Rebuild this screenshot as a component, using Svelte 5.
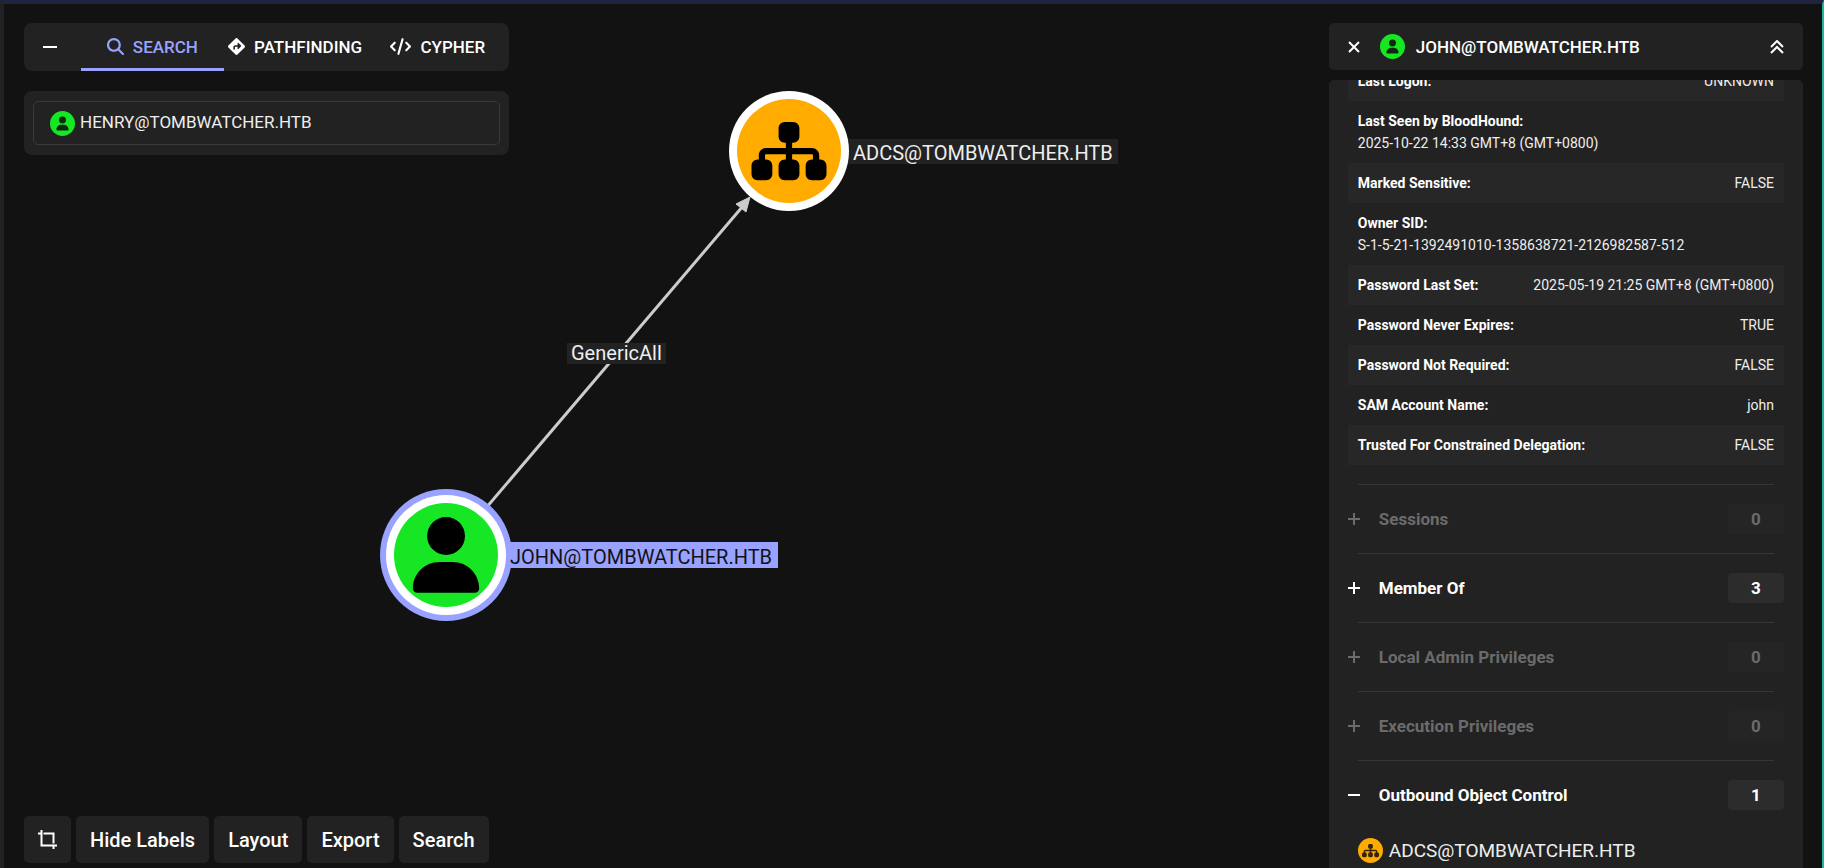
<script lang="ts">
    const userIcon =
        "M224 256A128 128 0 1 0 224 0a128 128 0 1 0 0 256zm-45.7 48C79.8 304 0 383.8 0 482.3C0 498.7 13.3 512 29.7 512H418.3c16.4 0 29.7-13.3 29.7-29.7C448 383.8 368.2 304 269.7 304H178.3z";
    const sitemapIcon =
        "M208 80c0-26.5 21.5-48 48-48h64c26.5 0 48 21.5 48 48v64c0 26.5-21.5 48-48 48h-8v40H464c30.9 0 56 25.1 56 56v32h8c26.5 0 48 21.5 48 48v64c0 26.5-21.5 48-48 48H464c-26.5 0-48-21.5-48-48V368c0-26.5 21.5-48 48-48h8V288c0-4.4-3.6-8-8-8H312v40h8c26.5 0 48 21.5 48 48v64c0 26.5-21.5 48-48 48H256c-26.5 0-48-21.5-48-48V368c0-26.5 21.5-48 48-48h8V280H112c-4.4 0-8 3.6-8 8v32h8c26.5 0 48 21.5 48 48v64c0 26.5-21.5 48-48 48H48c-26.5 0-48-21.5-48-48V368c0-26.5 21.5-48 48-48h8V288c0-30.9 25.1-56 56-56H264V192h-8c-26.5 0-48-21.5-48-48V80z";

    const tabs = ["Search", "Pathfinding", "Cypher"];
    const tools = ["Hide Labels", "Layout", "Export", "Search"];

    const fields = [
        { key: "Last Logon:", value: "UNKNOWN" },
        { key: "Last Seen by BloodHound:", value: "2025-10-22 14:33 GMT+8 (GMT+0800)", stacked: true },
        { key: "Marked Sensitive:", value: "FALSE" },
        { key: "Owner SID:", value: "S-1-5-21-1392491010-1358638721-2126982587-512", stacked: true },
        { key: "Password Last Set:", value: "2025-05-19 21:25 GMT+8 (GMT+0800)" },
        { key: "Password Never Expires:", value: "TRUE" },
        { key: "Password Not Required:", value: "FALSE" },
        { key: "SAM Account Name:", value: "john" },
        { key: "Trusted For Constrained Delegation:", value: "FALSE" },
    ];

    let sections = $state([
        { label: "Sessions", count: 0, open: false, items: [] as string[] },
        { label: "Member Of", count: 3, open: false, items: [] as string[] },
        { label: "Local Admin Privileges", count: 0, open: false, items: [] as string[] },
        { label: "Execution Privileges", count: 0, open: false, items: [] as string[] },
        { label: "Outbound Object Control", count: 1, open: true, items: ["ADCS@TOMBWATCHER.HTB"] },
    ]);

    let activeTab = $state("Search");
    let query = $state("HENRY@TOMBWATCHER.HTB");
    let details: HTMLElement;

    $effect(() => {
        details.scrollTop = 19;
    });
</script>

{#snippet userBadge()}
    <svg class="kind" viewBox="0 0 25 25" aria-hidden="true">
        <circle cx="12.5" cy="12.5" r="12.5" fill="#17e625" />
        <path d={userIcon} fill="#0b2a0d" transform="translate(6.4 5.5) scale(0.0272)" />
    </svg>
{/snippet}

<div class="page">
    <svg class="graph" role="img" aria-label="Graph">
        <line x1="442" y1="551" x2="739" y2="202" stroke="#cccccc" stroke-width="3" />
        <path d="M746 193L732 200L737 204L742 208Z" fill="#cccccc" stroke="#cccccc" />
        <rect x="563" y="339" width="99" height="21" fill="#222222" />
        <text x="567" y="356" fill="#eeeeee">GenericAll</text>

        <rect x="842" y="135" width="272" height="25" fill="#222222" />
        <circle cx="785" cy="147" r="60" fill="#ffffff" />
        <circle cx="785" cy="147" r="52" fill="#ffab00" />
        <path d={sitemapIcon} transform="translate(747.5 113.8) scale(0.1302)" />
        <text x="849" y="156" fill="#eeeeee">ADCS@TOMBWATCHER.HTB</text>

        <rect x="500" y="538" width="274" height="26" fill="#99a3ff" />
        <circle cx="442" cy="551" r="66" fill="#99a3ff" />
        <circle cx="442" cy="551" r="60" fill="#ffffff" />
        <circle cx="442" cy="551" r="52" fill="#17e625" />
        <path d={userIcon} transform="translate(408.9 513) scale(0.148)" />
        <text x="506" y="560" fill="#121212">JOHN@TOMBWATCHER.HTB</text>
    </svg>

    <div class="overlay">
        <div class="left">
            <div class="explore">
                <div class="panel tabbar">
                    <button class="collapse" aria-label="Collapse">
                        <svg width="14" height="14" viewBox="0 0 14 14"><path d="M0 7h14" stroke="#fff" stroke-width="2" /></svg>
                    </button>
                    <div class="tabs" role="tablist">
                        {#each tabs as tab}
                            <button class="tab" role="tab" class:active={activeTab == tab} aria-selected={activeTab == tab} onclick={() => (activeTab = tab)}>
                                {#if tab == "Search"}
                                    <svg width="17" height="17" viewBox="0 0 512 512"><path fill="currentColor" d="M416 208c0 45.900-14.900 88.300-40 122.700L502.600 457.400c12.500 12.500 12.500 32.800 0 45.300s-32.800 12.500-45.300 0L330.700 376c-34.400 25.200-76.800 40-122.700 40C93.100 416 0 322.900 0 208S93.100 0 208 0S416 93.100 416 208zM208 352a144 144 0 1 0 0-288 144 144 0 1 0 0 288z" /></svg>
                                {:else if tab == "Pathfinding"}
                                    <svg width="17" height="17" viewBox="0 0 512 512"><path fill="currentColor" d="M227.700 11.700c15.600-15.600 40.900-15.600 56.600 0l216 216c15.600 15.600 15.600 40.900 0 56.600l-216 216c-15.600 15.600-40.900 15.600-56.600 0l-216-216c-15.600-15.600-15.600-40.900 0-56.600l216-216zm87.600 137c-4.600-4.600-11.500-5.900-17.400-3.500s-9.900 8.300-9.900 14.800v56H224c-35.300 0-64 28.700-64 64v48c0 13.300 10.700 24 24 24s24-10.700 24-24V280c0-8.800 7.200-16 16-16h64v56c0 6.500 3.900 12.300 9.900 14.800s12.900 1.100 17.400-3.500l80-80c6.200-6.200 6.200-16.400 0-22.600l-80-80z" /></svg>
                                {:else}
                                    <svg width="21" height="17" viewBox="0 0 640 512"><path fill="currentColor" d="M392.800 1.200c-17-4.900-34.700 5-39.600 22l-128 448c-4.900 17 5 34.700 22 39.600s34.700-5 39.600-22l128-448c4.900-17-5-34.700-22-39.600zm80.600 120.100c-12.500 12.500-12.500 32.800 0 45.300L562.700 256l-89.400 89.400c-12.500 12.500-12.500 32.800 0 45.300s32.800 12.500 45.300 0l112-112c12.500-12.500 12.500-32.800 0-45.300l-112-112c-12.500-12.500-32.800-12.500-45.300 0zm-306.700 0c-12.500-12.500-32.800-12.500-45.300 0l-112 112c-12.500 12.500-12.500 32.800 0 45.300l112 112c12.500 12.500 32.800 12.500 45.300 0s12.500-32.800 0-45.300L77.300 256l89.400-89.400c12.500-12.500 12.500-32.800 0-45.300z" /></svg>
                                {/if}
                                {tab.toUpperCase()}
                            </button>
                        {/each}
                    </div>
                </div>

                <div class="panel search">
                    <label class="field">
                        {@render userBadge()}
                        <input type="text" aria-label="Search nodes" bind:value={query} />
                    </label>
                </div>
            </div>

            <div class="toolbar">
                <button class="tool icon" aria-label="Fit graph">
                    <svg width="19" height="19" viewBox="0 0 19 19" fill="none" stroke="#fff" stroke-width="2">
                        <path d="M3.500 0V15.500H19M0 3.500H2.500M5.500 3.500H15.500V13.500M15.500 16.500V19" />
                    </svg>
                </button>
                {#each tools as tool}
                    <button class="tool">{tool}</button>
                {/each}
            </div>
        </div>

        <aside class="right">
            <div class="panel title">
                <button aria-label="Close">
                    <svg width="12" height="12" viewBox="0 0 12 12"><path d="M1 1L11 11M11 1L1 11" stroke="#fff" stroke-width="2" /></svg>
                </button>
                {@render userBadge()}
                <h1>JOHN@TOMBWATCHER.HTB</h1>
                <button aria-label="Collapse all">
                    <svg width="14" height="14" viewBox="0 0 14 14" fill="none" stroke="#fff" stroke-width="2"><path d="M1 7L7 1L13 7M1 13L7 7L13 13" /></svg>
                </button>
            </div>

            <div class="panel details" bind:this={details}>
                <dl>
                    {#each fields as field}
                        <div class="row" class:stacked={field.stacked}>
                            <dt>{field.key}</dt>
                            <dd>{field.value}</dd>
                        </div>
                    {/each}
                </dl>

                {#each sections as section}
                    <section>
                        <button class="section" disabled={section.count == 0} onclick={() => (section.open = !section.open)}>
                            <svg width="12" height="12" viewBox="0 0 12 12" stroke="currentColor" stroke-width="2">
                                <path d={section.open ? "M0 6H12" : "M0 6H12M6 0V12"} />
                            </svg>
                            <span class="label">{section.label}</span>
                            <span class="count">{section.count}</span>
                        </button>
                        {#if section.open}
                            {#each section.items as item}
                                <a class="item" href="#adcs">
                                    <svg class="kind" viewBox="0 0 25 25" aria-hidden="true">
                                        <circle cx="12.5" cy="12.5" r="12.5" fill="#ffab00" />
                                        <path d={sitemapIcon} fill="#33240a" transform="translate(4 5) scale(0.0295)" />
                                    </svg>
                                    {item}
                                </a>
                            {/each}
                        {/if}
                    </section>
                {/each}
            </div>
        </aside>
    </div>
</div>

<style>
    :global(body) {
        background: #121212;
    }
    * {
        box-sizing: border-box;
    }
    .page {
        position: relative;
        height: 100vh;
        overflow: hidden;
        border-top: 4px solid #1f2440;
        border-left: 4px solid #222222;
        border-right: 2px solid #1fb89c;
        font-family: Roboto, sans-serif;
        color: #ffffff;
    }
    .graph {
        position: absolute;
        inset: 0;
        width: 100%;
        height: 100%;
        font-size: 20px;
    }
    .overlay {
        position: relative;
        display: flex;
        justify-content: space-between;
        height: 100%;
        padding: 19px 19px 0 20px;
    }
    button {
        font: inherit;
        color: inherit;
        background: none;
        border: none;
        padding: 0;
        cursor: pointer;
    }
    svg {
        display: block;
        flex: none;
    }
    .kind {
        width: 25px;
        height: 25px;
    }
    .panel {
        background: #222222;
        border-radius: 8px;
    }
    .left {
        display: flex;
        flex-direction: column;
        justify-content: space-between;
        padding-bottom: 5px;
    }
    .explore {
        display: flex;
        flex-direction: column;
        gap: 20px;
        width: 26.6vw;
    }
    .tabbar {
        display: flex;
        height: 48px;
        padding: 0 0 0 5px;
    }
    .collapse {
        display: flex;
        align-items: center;
        justify-content: center;
        width: 42px;
        margin-right: 10px;
    }
    .tabs {
        flex: 1;
        display: grid;
        grid-template-columns: repeat(3, 1fr);
    }
    .tab {
        display: flex;
        align-items: center;
        justify-content: center;
        gap: 9px;
        padding-top: 2px;
        border-bottom: 3px solid transparent;
        font-size: 17px;
        font-weight: 500;
    }
    .tab.active {
        color: #99a3ff;
        border-bottom-color: #99a3ff;
    }
    .search {
        padding: 10px 9px;
    }
    .field {
        display: flex;
        align-items: center;
        gap: 5px;
        height: 44px;
        padding: 0 16px;
        border: 1px solid #3a3a3a;
        border-radius: 5px;
    }
    .field input {
        flex: 1;
        min-width: 0;
        padding: 0 0 2px;
        border: none;
        outline: none;
        background: none;
        font: inherit;
        font-size: 17px;
        color: #eeeeee;
    }
    .toolbar {
        display: flex;
        gap: 5px;
    }
    .tool {
        height: 47px;
        padding: 0 14px;
        border-radius: 5px;
        background: #222222;
        font-size: 20px;
        font-weight: 500;
    }
    .right {
        display: flex;
        flex-direction: column;
        gap: 10px;
        width: 26vw;
    }
    .right .panel {
        border-radius: 5px;
    }
    .title {
        display: flex;
        align-items: center;
        flex: none;
        height: 47px;
        padding: 0 19px;
    }
    .title .kind {
        margin: 0 11px 0 20px;
    }
    h1 {
        flex: 1;
        margin: 0;
        font-size: 17px;
        font-weight: 500;
    }
    .right .details {
        flex: 1;
        min-height: 0;
        overflow-y: auto;
        scrollbar-width: none;
        padding: 0 19px 40px;
        border-bottom-left-radius: 0;
        border-bottom-right-radius: 0;
    }
    dl {
        margin: 0 0 19px;
        font-size: 14px;
        line-height: 20px;
    }
    .row {
        display: flex;
        justify-content: space-between;
        padding: 10px;
    }
    .row:nth-child(odd) {
        background: #272727;
    }
    .row.stacked {
        flex-direction: column;
        gap: 2px;
    }
    dt {
        font-weight: 700;
    }
    dd {
        margin: 0;
        color: #eeeeee;
    }
    section::before {
        content: "";
        display: block;
        height: 1px;
        margin: 0 10px;
        background: #363636;
    }
    .section {
        display: flex;
        align-items: center;
        gap: 19px;
        width: 100%;
        height: 68px;
        font-size: 17px;
        font-weight: 700;
        text-align: left;
    }
    .section:disabled {
        color: #6b6b6b;
        cursor: default;
    }
    .label {
        flex: 1;
    }
    .count {
        width: 56px;
        border-radius: 4px;
        background: #2c2c2c;
        line-height: 30px;
        text-align: center;
    }
    .section:disabled .count {
        background: #252525;
    }
    .item {
        display: flex;
        align-items: center;
        gap: 6px;
        padding: 9px 10px 6px;
        font-size: 19px;
        color: #eeeeee;
        text-decoration: none;
    }
</style>
